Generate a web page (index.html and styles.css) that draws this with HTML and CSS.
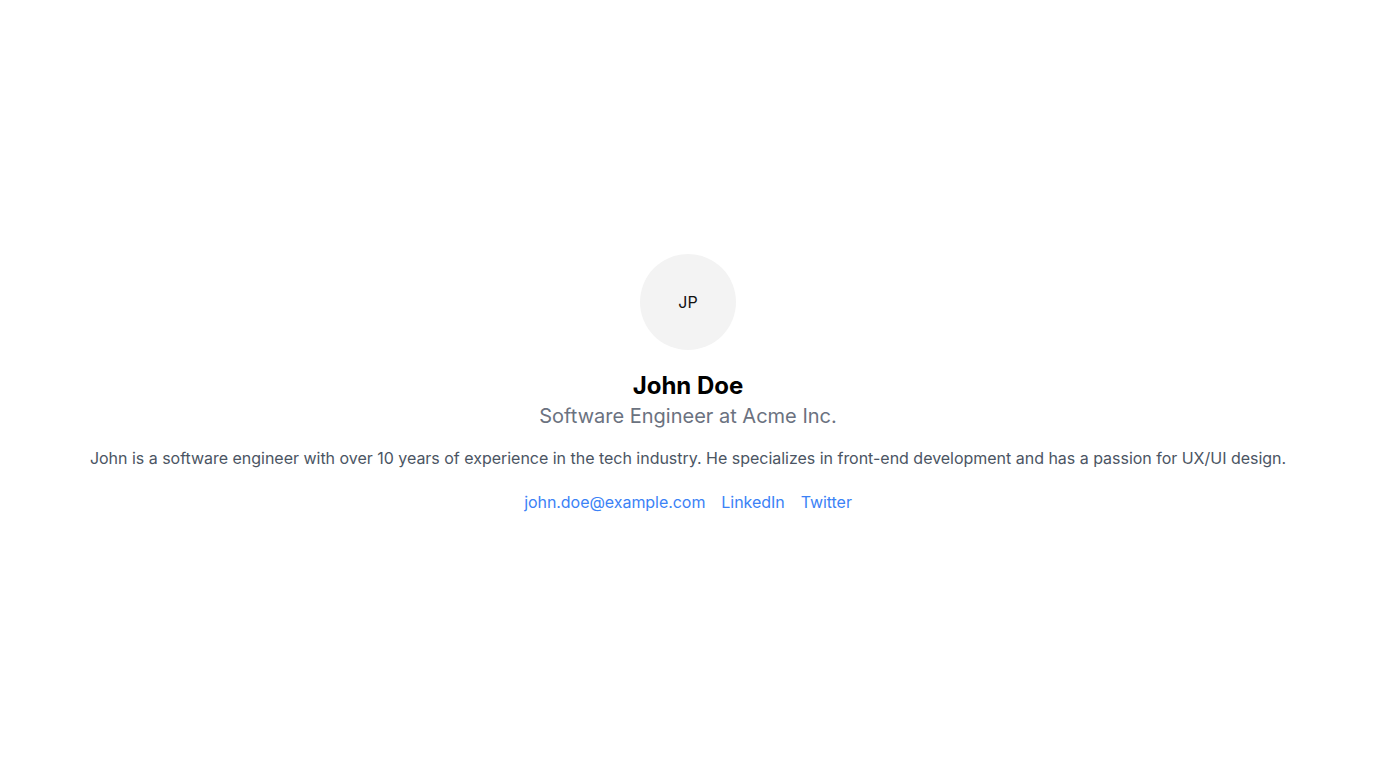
FILE: index.html
```html
<!DOCTYPE html>
<html lang="en">
<head>
<meta charset="utf-8">
<title>John Doe</title>
<link rel="stylesheet" href="styles.css">
</head>
<body>
<main class="page">
  <section class="profile">
    <div class="avatar">JP</div>
    <h1 class="name">John Doe</h1>
    <p class="role">Software Engineer at Acme Inc.</p>
    <p class="bio">John is a software engineer with over 10 years of experience in the tech industry. He specializes in front-end development and has a passion for UX/UI design.</p>
    <nav class="links">
      <a href="#">john.doe@example.com</a>
      <a href="#">LinkedIn</a>
      <a href="#">Twitter</a>
    </nav>
  </section>
</main>
</body>
</html>
```
FILE: styles.css
```css
* { box-sizing: border-box; }
html, body { margin: 0; padding: 0; }
body {
  font-family: Inter, "Noto Sans", sans-serif;
  background: #ffffff;
  color: #000;
}
.page {
  min-height: 100vh;
  display: flex;
  align-items: center;
  justify-content: center;
}
.profile {
  display: flex;
  flex-direction: column;
  align-items: center;
  text-align: center;
  padding-bottom: 1px;
}
.avatar {
  width: 96px;
  height: 96px;
  border-radius: 50%;
  background: #f3f3f3;
  display: flex;
  align-items: center;
  justify-content: center;
  font-size: 16px;
  color: #111;
}
.name {
  margin: 20px 0 0;
  font-size: 24px;
  line-height: 32px;
  font-weight: 700;
}
.role {
  margin: 0;
  font-size: 20px;
  line-height: 28px;
  color: #6b7280;
}
.bio {
  margin: 16px 0 0;
  font-size: 16px;
  line-height: 24px;
  color: #4b5563;
  letter-spacing: -0.02px;
}
.links {
  margin-top: 20px;
  display: flex;
  gap: 16px;
}
.links a {
  font-size: 16px;
  line-height: 24px;
  color: #3b82f6;
  text-decoration: none;
  letter-spacing: -0.05px;
}
```
